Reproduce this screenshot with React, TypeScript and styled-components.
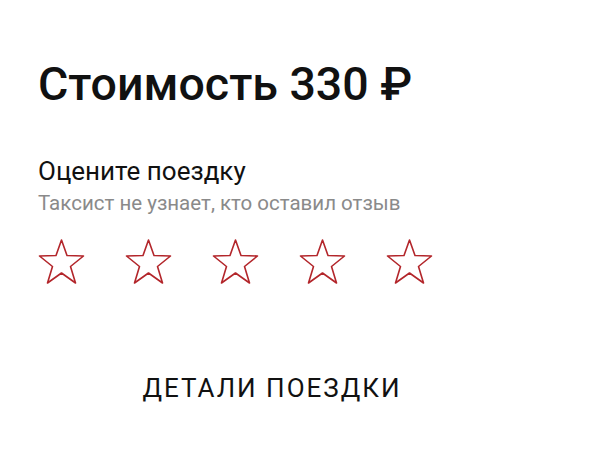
import React from "react";
import styled, { createGlobalStyle } from "styled-components";

const Global = createGlobalStyle`
  html, body { margin: 0; padding: 0; background: #fff; }
  body { font-family: Roboto, "Noto Sans", sans-serif; }
`;

const Page = styled.div`
  width: 600px;
  height: 456px;
  box-sizing: border-box;
  padding: 56px 38px 0 38px;
  display: flex;
  flex-direction: column;
`;

const Title = styled.h1`
  margin: 0;
  font-size: 46.5px;
  font-weight: 500;
  line-height: 56px;
  color: #111;
`;

const Heading = styled.div`
  margin-top: 44px;
  font-size: 26px;
  line-height: 30px;
  color: #111;
`;

const Sub = styled.div`
  margin-top: 5px;
  font-size: 20.5px;
  line-height: 24px;
  color: #8a8a8a;
`;

const Stars = styled.div`
  margin-top: 23px;
  display: flex;
  gap: 40px;
`;

const StarButton = styled.button`
  border: 0;
  padding: 0;
  background: none;
  width: 47px;
  height: 46px;
  display: block;
`;

const Details = styled.button`
  margin-top: 89px;
  align-self: center;
  margin-right: 56px;
  border: 0;
  background: none;
  font-family: Roboto, sans-serif;
  font-size: 26px;
  line-height: 30px;
  letter-spacing: 2px;
  color: #111;
  padding: 0;
`;

const Star = () => (
  <svg width="47" height="46" viewBox="0 0 47 46">
    <polygon
      points="23.5,2 29,17.5 45.5,18 32.5,28.5 37.5,45 23.5,35 9.5,45 14.5,28.5 1.5,18 18,17.5"
      fill="none"
      stroke="#b3262b"
      strokeWidth="1.6"
      strokeLinejoin="round"
    />
  </svg>
);

export default function App() {
  return (
    <>
      <Global />
      <Page>
        <Title>Стоимость 330 ₽</Title>
        <Heading>Оцените поездку</Heading>
        <Sub>Таксист не узнает, кто оставил отзыв</Sub>
        <Stars>
          {[1, 2, 3, 4, 5].map((i) => (
            <StarButton key={i} aria-label={`${i}`}>
              <Star />
            </StarButton>
          ))}
        </Stars>
        <Details>ДЕТАЛИ ПОЕЗДКИ</Details>
      </Page>
    </>
  );
}
